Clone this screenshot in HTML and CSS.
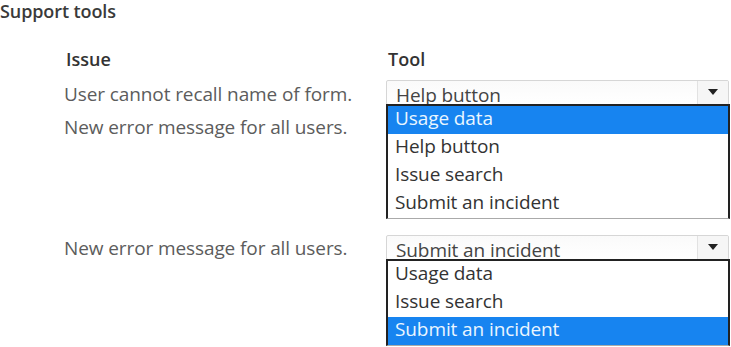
FILE: index.html
```html
<!DOCTYPE html>
<html lang="en">
<head>
  <meta charset="UTF-8">
  <title>Support tools</title>
  <link rel="stylesheet" href="styles.css">
</head>
<body>

  <h1 class="title">Support tools</h1>

  <div class="grid">
    <div class="head">Issue</div>
    <div class="head">Tool</div>

    <div class="issues">
      <p>User cannot recall name of form.</p>
      <p>New error message for all users.</p>
    </div>
    <div class="picker">
      <div class="box">
        <span class="value">Help button</span>
        <span class="arrow"></span>
      </div>
      <ul class="list">
        <li class="selected">Usage data</li>
        <li>Help button</li>
        <li>Issue search</li>
        <li>Submit an incident</li>
      </ul>
    </div>

    <div class="issues second">
      <p>New error message for all users.</p>
    </div>
    <div class="picker second">
      <div class="box">
        <span class="value">Submit an incident</span>
        <span class="arrow"></span>
      </div>
      <ul class="list">
        <li>Usage data</li>
        <li>Issue search</li>
        <li class="selected">Submit an incident</li>
      </ul>
    </div>
  </div>

</body>
</html>
```

FILE: styles.css
```css
body {
  font-family: 'Open Sans', 'Noto Sans', sans-serif;
  background-color: #ffffff;
  margin: 0;
  padding: 0;
  color: #333;
  overflow: hidden;
}

.title {
  margin: 0;
  font-size: 18px;
  line-height: 22px;
  font-weight: 600;
  color: #3a3a3a;
  letter-spacing: -0.1px;
}

.grid {
  display: grid;
  grid-template-columns: 322px 343px;
  padding-left: 64px;
  padding-top: 25px;
}

.head {
  font-size: 18px;
  line-height: 24px;
  font-weight: 600;
  color: #333;
  height: 33px;
  padding-left: 2px;
}

.issues {
  margin-top: -2px;
}

.issues.second {
  margin-top: -3px;
}

.issues p {
  margin: 0;
  font-size: 19px;
  line-height: 33px;
  color: #5c5c5c;
  letter-spacing: -0.1px;
}

.picker {
  position: relative;
  height: 155px;
}

.picker.second {
  height: 112px;
}

.box {
  height: 23px;
  border: 1px solid #d6d6d6;
  border-radius: 2px;
  background: linear-gradient(#fafafa, #ffffff);
  display: flex;
  overflow: hidden;
}

.value {
  flex: 1;
  font-size: 19px;
  line-height: 20px;
  padding-top: 4px;
  padding-left: 9px;
  color: #444;
  letter-spacing: -0.1px;
}

.arrow {
  width: 30px;
  border-left: 1px solid #e2e2e2;
  background: #f6f6f6;
  position: relative;
}

.arrow::after {
  content: "";
  position: absolute;
  left: 10px;
  top: 8px;
  border-left: 5px solid transparent;
  border-right: 5px solid transparent;
  border-top: 6px solid #222;
}

.list {
  position: absolute;
  left: 0;
  right: -1px;
  top: 24px;
  margin: 0;
  padding: 0;
  list-style: none;
  background: #fff;
  border: 2px solid #222;
  border-bottom: 1px solid #aaa;
}

.list li {
  height: 28px;
  font-size: 19px;
  line-height: 25px;
  padding-left: 7px;
  color: #333;
  letter-spacing: -0.1px;
}

.list li.selected {
  background-color: #1784f0;
  color: #eaf6ff;
}
```
